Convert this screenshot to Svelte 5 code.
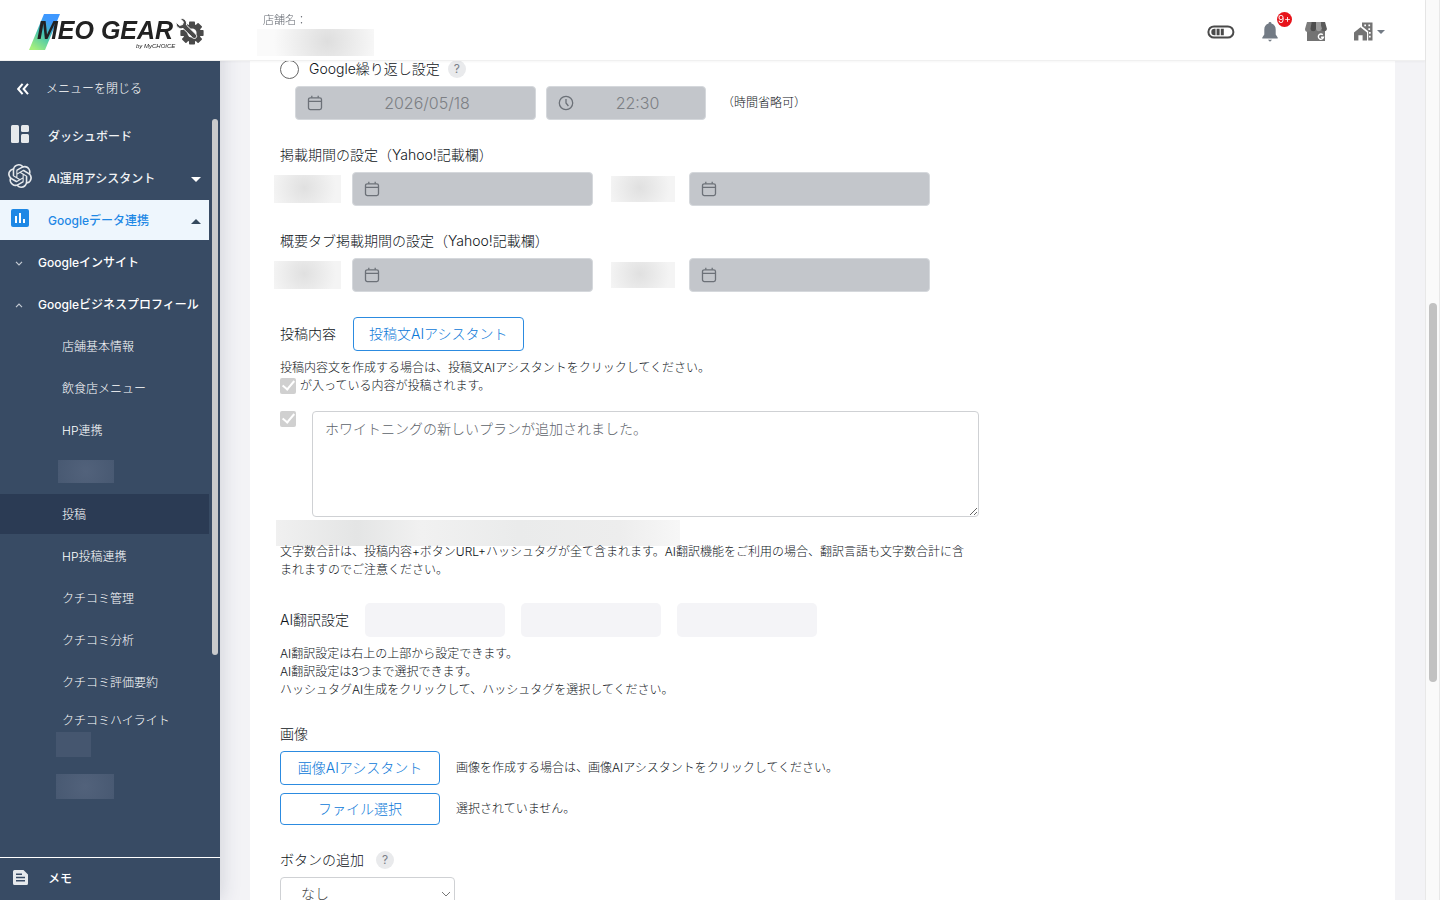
<script>
  const postMenu = [
    { label: '店舗基本情報' },
    { label: '飲食店メニュー' },
    { label: 'HP連携' },
    { mask: 'upper' },
    { label: '投稿', current: true },
    { label: 'HP投稿連携' },
    { label: 'クチコミ管理' },
    { label: 'クチコミ分析' },
    { label: 'クチコミ評価要約' },
    { label: 'クチコミハイライト', short: true },
    { mask: 'small' },
    { mask: 'lower' }
  ]

  const periods = [
    { id: 'period', title: '掲載期間の設定（Yahoo!記載欄）' },
    { id: 'summary', title: '概要タブ掲載期間の設定（Yahoo!記載欄）' }
  ]

  const gearTeeth = [0, 45, 90, 135, 180, 225, 270, 315]

  let message = 'ホワイトニングの新しいプランが追加されました。'
</script>

{#snippet calendar()}
  <svg class="field-icon" viewBox="0 0 16 16" width="16" height="16" aria-hidden="true">
    <rect x="1.5" y="2.8" width="13" height="11.8" rx="1.8" />
    <path d="M1.5 6.4h13M4.8 0.8v2M11.2 0.8v2" />
  </svg>
{/snippet}

<header class="header">
  <a class="logo" href="#top" aria-label="MEO GEAR">
    <svg viewBox="0 0 176 40" width="176" height="40">
      <defs>
        <linearGradient id="slash" x1="0.8" y1="0" x2="0.2" y2="1">
          <stop offset="0.2" stop-color="#3e98ff" />
          <stop offset="0.55" stop-color="#43c3b0" />
          <stop offset="1" stop-color="#a6f07c" />
        </linearGradient>
      </defs>
      <path d="M15 4h16L16 40H0z" fill="url(#slash)" />
      <text class="logo-name" x="8" y="29">MEO GEAR</text>
      <text class="logo-by" x="107" y="38">by MyCHOICE</text>
      <g fill="#4a4a4a">
        <circle cx="163" cy="23" r="9" />
        {#each gearTeeth as angle}
          <rect x="160" y="11.4" width="6" height="5" rx="0.8" transform="rotate({angle} 163 23)" />
        {/each}
        <circle cx="163" cy="23" r="4.6" fill="#fff" />
        <path
          d="M151 8.600c3-.8 6.400 1.200 6.600 4.600l-.2 1.800 9.600 9.400c2 2.600-.8 5.400-3.400 3.400l-9.600-9.400c-3.400 1.200-7.400-1.200-6.800-6.200l3.400 3.200 3-.8.8-2.800z"
          stroke="#fff"
          stroke-width="1"
        />
      </g>
    </svg>
  </a>
  <div class="store">
    <span>店舗名：</span>
    <div class="mask store-mask"></div>
  </div>
  <div class="tools">
    <button aria-label="残量">
      <svg viewBox="0 0 28 14" width="28" height="14">
        <rect x="1.4" y="1.4" width="25" height="11.2" rx="5.6" fill="none" stroke="#4a4a4a" stroke-width="2" />
        <path d="M7.5 3.8h1v6.4h-1a3.2 3.2 0 0 1 0-6.4zM9.6 3.8h3v6.4h-3zM13.8 3.8h3v6.4h-3z" fill="#4a4a4a" />
      </svg>
    </button>
    <button class="bell" aria-label="お知らせ">
      <svg viewBox="0 0 16 20" width="16" height="20">
        <path d="M8 0a1.4 1.4 0 0 1 1.4 1.6c2.8.7 4.3 3 4.3 5.9v5l2 3v1H.3v-1l2-3v-5c0-2.9 1.5-5.2 4.3-5.9A1.4 1.4 0 0 1 8 0zM5.9 17.7h4.2L8 19.8z" fill="#737b85" />
      </svg>
      <span class="badge">9+</span>
    </button>
    <button aria-label="店舗">
      <svg viewBox="0 0 22 19" width="22" height="19">
        <path d="M2 7h18v12H2z" fill="#737373" />
        <path d="M2 0h5L6 7a3 3 0 0 1-6 0z" fill="#7c7c7c" />
        <path d="M6.5 0H11v7a2.8 2.8 0 0 1-5.5 0z" fill="#4d4d4d" />
        <path d="M11 0h4.5l1 7A2.8 2.8 0 0 1 11 7z" fill="#9a9a9a" />
        <path d="M15.5 0H20l2 7a2.8 2.8 0 0 1-5.5 0z" fill="#5b5b5b" />
        <path d="M17.8 12.8a2.6 2.6 0 1 0 .7 2.4h-2.4" fill="none" stroke="#fff" stroke-width="1.4" />
      </svg>
    </button>
    <button class="building" aria-label="企業メニュー">
      <svg viewBox="0 0 19 19" width="19" height="19" fill="#737373">
        <path d="M0 10.5l6.500-5.300L13 10.500v8H8.600v-5.300H4.400v5.300H0z" />
        <path fill-rule="evenodd" d="M8 .5h10.500v18h-4.300V9.200L8 4.300zM10.300 2.400v1.800h1.700V2.400zM14.400 2.400v1.800h1.700V2.400zM14.400 6.200V8h1.700V6.200zM15 10v1.800h1.700V10zM15 13.800v1.800h1.700v-1.800z" />
      </svg>
      <svg viewBox="0 0 8 4" width="8" height="4"><path d="M0 0h8L4 4z" fill="#737b85" /></svg>
    </button>
  </div>
</header>

<div class="page">
  <aside class="sidebar">
    <button class="collapse">
      <svg viewBox="0 0 12 12" width="12" height="12" fill="none" stroke="#fff" stroke-width="2">
        <path d="M5.6 .8L1.2 6l4.4 5.2M11 .8L6.6 6l4.4 5.2" />
      </svg>
      メニューを閉じる
    </button>
    <div class="menu">
      <nav>
        <a class="item top" href="#dashboard">
          <span class="icon">
            <svg viewBox="0 0 18 18" width="18" height="18" fill="#e6e9ec">
              <rect width="8" height="18" rx="1.5" />
              <rect x="10" width="8" height="7" rx="1.5" />
              <rect x="10" y="9" width="8" height="9" rx="1.5" />
            </svg>
          </span>
          ダッシュボード
        </a>
        <a class="item top" href="#ai">
          <span class="icon">
            <svg viewBox="0 0 24 24" width="24" height="24" fill="#e6e9ec">
              <path d="M22.2819 9.8211a5.9847 5.9847 0 0 0-.5157-4.9108 6.0462 6.0462 0 0 0-6.5098-2.9A6.0651 6.0651 0 0 0 4.9807 4.1818a5.9847 5.9847 0 0 0-3.9977 2.9 6.0462 6.0462 0 0 0 .7427 7.0966 5.98 5.98 0 0 0 .511 4.9107 6.051 6.051 0 0 0 6.5146 2.9001A5.9847 5.9847 0 0 0 13.2599 24a6.0557 6.0557 0 0 0 5.7718-4.2058 5.9894 5.9894 0 0 0 3.9977-2.9001 6.0557 6.0557 0 0 0-.7475-7.0729zm-9.022 12.6081a4.4755 4.4755 0 0 1-2.8764-1.0408l.1419-.0804 4.7783-2.7582a.7948.7948 0 0 0 .3927-.6813v-6.7369l2.02 1.1686a.071.071 0 0 1 .038.052v5.5826a4.504 4.504 0 0 1-4.4945 4.4944zm-9.6607-4.1254a4.4708 4.4708 0 0 1-.5346-3.0137l.142.0852 4.783 2.7582a.7712.7712 0 0 0 .7806 0l5.8428-3.3685v2.3324a.0804.0804 0 0 1-.0332.0615L9.74 19.9502a4.4992 4.4992 0 0 1-6.1408-1.6464zM2.3408 7.8956a4.485 4.485 0 0 1 2.3655-1.9728V11.6a.7664.7664 0 0 0 .3879.6765l5.8144 3.3543-2.0201 1.1685a.0757.0757 0 0 1-.071 0l-4.8303-2.7865A4.504 4.504 0 0 1 2.3408 7.872zm16.5963 3.8558L13.1038 8.364 15.1192 7.2a.0757.0757 0 0 1 .071 0l4.8303 2.7913a4.4944 4.4944 0 0 1-.6765 8.1042v-5.6772a.79.79 0 0 0-.407-.667zm2.0107-3.0231l-.142-.0852-4.7735-2.7818a.7759.7759 0 0 0-.7854 0L9.409 9.2297V6.8974a.0662.0662 0 0 1 .0284-.0615l4.8303-2.7866a4.4992 4.4992 0 0 1 6.6802 4.66zM8.3065 12.863l-2.02-1.1638a.0804.0804 0 0 1-.038-.0567V6.0742a4.4992 4.4992 0 0 1 7.3757-3.4537l-.142.0805L8.704 5.459a.7948.7948 0 0 0-.3927.6813zm1.0976-2.3654l2.602-1.4998 2.6069 1.4998v2.9994l-2.5974 1.4997-2.6067-1.4997Z" />
            </svg>
          </span>
          AI運用アシスタント
          <svg class="arrow" viewBox="0 0 10 5" width="10" height="5"><path d="M0 0h10L5 5z" fill="#fff" /></svg>
        </a>
        <a class="item top active" href="#google">
          <span class="icon">
            <svg viewBox="0 0 18 18" width="18" height="18">
              <rect width="18" height="18" rx="2" fill="#1e88e5" />
              <path d="M4 7h2v7H4zM8 4h2v10H8zM12 10h2v4h-2z" fill="#fff" />
            </svg>
          </span>
          Googleデータ連携
          <svg class="arrow" viewBox="0 0 10 5" width="10" height="5"><path d="M0 5h10L5 0z" fill="#34495e" /></svg>
        </a>
        <a class="item group" href="#insight">
          <svg viewBox="0 0 8 5" width="8" height="5"><path d="M1 .8l3 3 3-3" /></svg>
          Googleインサイト
        </a>
        <a class="item group" href="#profile">
          <svg viewBox="0 0 8 5" width="8" height="5"><path d="M1 4.2l3-3 3 3" /></svg>
          Googleビジネスプロフィール
        </a>
        {#each postMenu as entry}
          {#if entry.mask}
            <div class="item-mask {entry.mask}"></div>
          {:else}
            <a class="item sub" class:current={entry.current} class:short={entry.short} href="#post">{entry.label}</a>
          {/if}
        {/each}
      </nav>
      <div class="menu-thumb"></div>
    </div>
    <a class="memo" href="#memo">
      <svg viewBox="0 0 15 15" width="15" height="15">
        <path d="M1.5 0h9L15 4.5v9a1.5 1.5 0 0 1-1.5 1.5h-12A1.5 1.5 0 0 1 0 13.5v-12A1.5 1.5 0 0 1 1.5 0z" fill="#e6e9ec" />
        <path d="M3 4.2h6M3 7.5h9M3 10.8h9" stroke="#384b64" stroke-width="1.4" />
      </svg>
      <span>メモ</span>
    </a>
  </aside>

  <main class="main">
    <form class="panel">
      <div class="repeat">
        <input type="radio" id="repeat" name="timing" />
        <label for="repeat">Google繰り返し設定</label>
        <button type="button" class="help">?</button>
      </div>
      <div class="schedule">
        <label class="field">
          {@render calendar()}
          <input type="text" value="2026/05/18" aria-label="日付" disabled />
        </label>
        <label class="field time">
          <svg class="field-icon" viewBox="0 0 16 16" width="16" height="16" aria-hidden="true">
            <circle cx="8" cy="8" r="6.7" />
            <path d="M8 4v4l2.4 3" />
          </svg>
          <input type="text" value="22:30" aria-label="時間" disabled />
        </label>
        <span class="note">（時間省略可）</span>
      </div>

      {#each periods as period}
        <h2>{period.title}</h2>
        <div class="period">
          <div class="mask from"></div>
          <label class="field">
            {@render calendar()}
            <input type="text" id="{period.id}-from" aria-label="開始日" disabled />
          </label>
          <div class="mask to"></div>
          <label class="field">
            {@render calendar()}
            <input type="text" id="{period.id}-to" aria-label="終了日" disabled />
          </label>
        </div>
      {/each}

      <div class="post-head">
        <label for="message">投稿内容</label>
        <button type="button" class="outline">投稿文AIアシスタント</button>
      </div>
      <div class="text">
        <p>投稿内容文を作成する場合は、投稿文AIアシスタントをクリックしてください。</p>
        <label class="included">
          <input type="checkbox" checked disabled />
          が入っている内容が投稿されます。
        </label>
      </div>
      <div class="message">
        <input type="checkbox" aria-label="投稿内容を含める" checked disabled />
        <textarea id="message" bind:value={message}></textarea>
      </div>
      <div class="mask count"></div>
      <p class="limit">文字数合計は、投稿内容+ボタンURL+ハッシュタグが全て含まれます。AI翻訳機能をご利用の場合、翻訳言語も文字数合計に含まれますのでご注意ください。</p>

      <div class="translate">
        <span>AI翻訳設定</span>
        <div class="language"></div>
        <div class="language"></div>
        <div class="language"></div>
      </div>
      <div class="text">
        <p>AI翻訳設定は右上の上部から設定できます。</p>
        <p>AI翻訳設定は3つまで選択できます。</p>
        <p>ハッシュタグAI生成をクリックして、ハッシュタグを選択してください。</p>
      </div>

      <h2>画像</h2>
      <div class="image-row">
        <button type="button" class="outline wide">画像AIアシスタント</button>
        <span>画像を作成する場合は、画像AIアシスタントをクリックしてください。</span>
      </div>
      <div class="image-row file">
        <button type="button" class="outline wide">ファイル選択</button>
        <span>選択されていません。</span>
      </div>

      <div class="button-head">
        <label for="action">ボタンの追加</label>
        <button type="button" class="help">?</button>
      </div>
      <div class="select">
        <select id="action">
          <option>なし</option>
        </select>
        <svg viewBox="0 0 10 6" width="10" height="6" aria-hidden="true"><path d="M1 1l4 4 4-4" fill="none" stroke="#777" /></svg>
      </div>
    </form>
  </main>

  <div class="scrollbar"><div class="thumb"></div></div>
</div>

<style>
  :global(body) {
    overflow: hidden;
    background: #f3f3f6;
    color: #0e1318;
    font-family: Inter, "Noto Sans CJK JP", sans-serif;
    font-size: 14px;
    font-weight: 300;
    line-height: 20px;
  }

  * {
    box-sizing: border-box;
  }

  button, input, textarea, select {
    margin: 0;
    font: inherit;
    color: inherit;
  }

  button {
    padding: 0;
    border: 0;
    background: none;
    cursor: pointer;
  }

  a {
    color: inherit;
    text-decoration: none;
  }

  p {
    margin: 0;
  }

  svg {
    flex: none;
    display: block;
  }

  h2 {
    margin: 25px 0 7px;
    font-size: 14px;
    font-weight: inherit;
    line-height: 20px;
  }

  .header {
    position: fixed;
    z-index: 2;
    top: 0;
    left: 0;
    right: 15px;
    display: flex;
    height: 61px;
    background: #fff;
    border-bottom: 1px solid #f0f0f0;
    box-shadow: 0 1px 2px rgba(0, 0, 0, .04);
  }

  .logo {
    padding: 10px 0 0 29px;
    width: 257px;
  }

  .logo-name {
    font: italic 700 25px "Liberation Sans", sans-serif;
    fill: #222;
  }

  .logo-by {
    font: italic 400 6px "Liberation Sans", sans-serif;
    fill: #222;
  }

  .store {
    padding-top: 11px;
    font-size: 11px;
    line-height: 18px;
    color: #62676f;
  }

  .store span {
    display: block;
    padding-left: 6px;
  }

  .mask {
    flex: none;
    background: radial-gradient(circle at 45% 45%, #e0e0e0, #f4f4f4 80%);
  }

  .store-mask {
    width: 117px;
    height: 27px;
    background: radial-gradient(circle at 60% 45%, #dedede, #fafafa 75%);
  }

  .tools {
    display: flex;
    align-items: center;
    gap: 27px;
    margin-left: auto;
    padding: 3px 40px 0 0;
  }

  .bell {
    position: relative;
  }

  .badge {
    position: absolute;
    top: -10px;
    left: 15px;
    width: 15px;
    height: 15px;
    border-radius: 50%;
    background: #e7131a;
    color: #fff;
    font-size: 10px;
    font-weight: 400;
    line-height: 15px;
    text-align: center;
  }

  .building {
    display: flex;
    align-items: center;
    gap: 4px;
  }

  .page {
    display: flex;
    height: 100vh;
  }

  .sidebar {
    z-index: 1;
    flex: none;
    display: flex;
    flex-direction: column;
    width: 220px;
    padding-top: 61px;
    background: #384b64;
    box-shadow: 0 0 20px rgba(40, 50, 80, .2);
    color: #fff;
    font-size: 12px;
  }

  .collapse {
    display: flex;
    align-items: center;
    gap: 17px;
    height: 55px;
    padding: 0 17px;
  }

  .menu {
    flex: 1;
    display: flex;
    gap: 3px;
    min-height: 0;
  }

  nav {
    display: flex;
    flex-direction: column;
    gap: 2px;
    width: 209px;
  }

  .item {
    flex: none;
    display: flex;
    align-items: center;
    height: 40px;
    padding-top: 2px;
    white-space: nowrap;
  }

  .top {
    padding-right: 8px;
    color: #f1f3f5;
    font-weight: 500;
  }

  .icon {
    display: flex;
    justify-content: center;
    width: 40px;
    margin-right: 8px;
    padding-bottom: 6px;
  }

  .arrow {
    margin-left: auto;
  }

  .active {
    background: #eef6fd;
    color: #1e88e5;
  }

  .group {
    gap: 15px;
    padding-left: 15px;
    font-weight: 500;
  }

  .group path {
    fill: none;
    stroke: #c5cbd3;
    stroke-width: 1.2;
  }

  .sub {
    padding-left: 62px;
  }

  .current {
    background: #2b3b54;
  }

  .short {
    height: 32px;
  }

  .item-mask {
    width: 56px;
    height: 23px;
    margin: 8px 0 9px 58px;
    background: radial-gradient(circle, #52627b, #485972);
  }

  .item-mask.small {
    width: 35px;
    height: 25px;
    margin: -6px 0 0 56px;
    background: #45566f;
  }

  .item-mask.lower {
    width: 58px;
    height: 25px;
    margin: 15px 0 0 56px;
  }

  .menu-thumb {
    width: 6px;
    height: 536px;
    margin-top: 3px;
    border-radius: 3px;
    background: #c9cacc;
  }

  .memo {
    display: flex;
    align-items: center;
    gap: 20px;
    height: 43px;
    padding: 0 13px 4px;
    border-top: 1px solid #fff;
    font-weight: 500;
  }

  .memo span {
    padding-top: 4px;
  }

  .main {
    flex: 1;
    min-width: 0;
    padding: 0 30px;
  }

  .panel {
    height: 100%;
    padding: 59px 30px 0;
    overflow: hidden;
    background: #fff;
  }

  .repeat, .button-head, .post-head, .translate, .image-row {
    display: flex;
    align-items: center;
  }

  .repeat input {
    appearance: none;
    width: 19px;
    height: 19px;
    margin-right: 10px;
    border: 1px solid #666;
    border-radius: 50%;
  }

  .help {
    width: 18px;
    height: 18px;
    margin-left: 8px;
    border-radius: 50%;
    background: #e9eaec;
    color: #7b8088;
    font-size: 12px;
    font-weight: 400;
    line-height: 18px;
  }

  .schedule {
    display: flex;
    align-items: center;
    gap: 10px;
    margin: 7px 0 25px 15px;
  }

  .field {
    flex: none;
    display: flex;
    align-items: center;
    width: 241px;
    height: 34px;
    padding: 0 4px 0 11px;
    border: 1px solid #d5d8dc;
    border-radius: 4px;
    background: #c3c6cb;
  }

  .field input {
    flex: 1;
    min-width: 0;
    padding: 0;
    border: 0;
    background: none;
    color: #7c7f84;
    font-size: 16px;
    text-align: center;
  }

  .field-icon {
    fill: none;
    stroke: #6c7178;
    stroke-width: 1.3;
  }

  .time {
    width: 160px;
  }

  .note {
    padding-left: 6px;
    font-size: 12px;
  }

  .period {
    display: flex;
    align-items: center;
    margin-left: -6px;
  }

  .from {
    width: 67px;
    height: 28px;
    margin-right: 11px;
  }

  .to {
    width: 64px;
    height: 26px;
    margin: 0 14px 0 18px;
  }

  .post-head {
    gap: 17px;
    margin-top: 25px;
  }

  .outline {
    height: 34px;
    padding: 0 15px;
    border: 1px solid #2c8be0;
    border-radius: 4px;
    background: #fff;
    color: #0b78d8;
  }

  .wide {
    width: 160px;
  }

  .text {
    margin-top: 8px;
    font-size: 12px;
    line-height: 18px;
  }

  .included {
    display: flex;
    align-items: center;
    gap: 4px;
  }

  input[type="checkbox"] {
    flex: none;
    appearance: none;
    display: grid;
    place-items: center;
    width: 16px;
    height: 16px;
    border-radius: 2px;
    background: #d0d0d0;
  }

  input[type="checkbox"]::after {
    content: "";
    width: 5px;
    height: 10px;
    margin-bottom: 4px;
    border: solid #fff;
    border-width: 0 2px 2px 0;
    transform: rotate(40deg);
  }

  .message {
    display: flex;
    align-items: flex-start;
    gap: 16px;
    max-width: 699px;
    margin-top: 16px;
  }

  textarea {
    flex: 1;
    height: 106px;
    padding: 7px 12px;
    border: 1px solid #cfd1d4;
    border-radius: 4px;
    outline: 0;
    color: #5c6269;
  }

  .count {
    width: 404px;
    height: 26px;
    margin: 3px 0 -3px -4px;
    background: linear-gradient(90deg, #f0f0f0, #e4e5e5 20%, #f1f1f1 36%, #eaebeb 60%, #ededed 85%, #f7f7f7);
  }

  .limit {
    max-width: 690px;
    font-size: 12px;
    line-height: 18px;
  }

  .translate {
    gap: 16px;
    margin-top: 24px;
  }

  .language {
    width: 140px;
    height: 34px;
    border-radius: 5px;
    background: #f4f4f7;
  }

  .image-row {
    gap: 16px;
    font-size: 12px;
  }

  .image-row button {
    font-size: 14px;
  }

  .file {
    margin-top: 8px;
  }

  .file button {
    height: 32px;
  }

  .button-head {
    gap: 4px;
    margin: 25px 0 7px;
  }

  .select {
    display: grid;
    align-items: center;
    width: 175px;
  }

  .select select, .select svg {
    grid-area: 1 / 1;
  }

  .select svg {
    justify-self: end;
    margin-right: 4px;
    pointer-events: none;
  }

  select {
    appearance: none;
    height: 34px;
    padding: 0 20px;
    border: 1px solid #cfd1d4;
    border-radius: 4px;
    background: #fff;
    color: #444;
  }

  .scrollbar {
    flex: none;
    width: 15px;
    padding: 303px 3px 0;
    border: solid #e8e8e8;
    border-width: 0 1px;
    background: #fafafa;
  }

  .thumb {
    width: 8px;
    height: 379px;
    border-radius: 4px;
    background: #c1c1c1;
  }
</style>
